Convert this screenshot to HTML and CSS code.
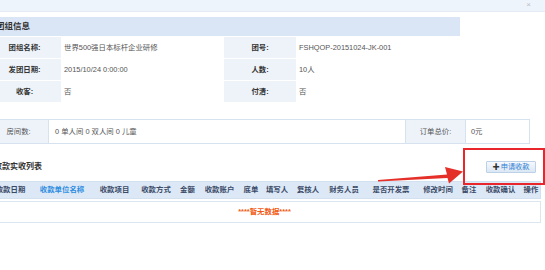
FILE: index.html
```html
<!DOCTYPE html>
<html lang="zh-CN">
<head>
  <meta charset="UTF-8" />
  <title>团组信息</title>
  <link rel="stylesheet" href="styles.css">
</head>
<body>
  <div class="topbar"><span class="close">×</span></div>

  <div class="content">
    <!-- 团组信息 -->
    <div class="section-head">团组信息</div>
    <div class="info">
      <div class="lbl">团组名称:</div><div class="val">世界500强日本标杆企业研修</div>
      <div class="lbl">团号:</div><div class="val">FSHQOP-20151024-JK-001</div>
      <div class="lbl">发团日期:</div><div class="val">2015/10/24 0:00:00</div>
      <div class="lbl">人数:</div><div class="val">10人</div>
      <div class="lbl">收客:</div><div class="val">否</div>
      <div class="lbl">付清:</div><div class="val">否</div>
    </div>

    <div class="room">
      <div class="room-lbl">房间数:</div>
      <div class="room-val">0 单人间 0 双人间 0 儿童</div>
      <div class="room-lbl total">订单总价:</div>
      <div class="room-val price">0元</div>
    </div>

    <!-- 收款列表 -->
    <div class="list-title">
      <span>收款实收列表</span>
      <button class="apply"><b>✚</b>申请收款</button>
    </div>
    <div class="grid-head">
      <span style="width:43px">收款日期</span>
      <span class="sorted" style="width:60px">收款单位名称</span>
      <span style="width:45px">收款项目</span>
      <span style="width:38px">收款方式</span>
      <span style="width:25px">金额</span>
      <span style="width:39px">收款账户</span>
      <span style="width:24px">底单</span>
      <span style="width:28px">填写人</span>
      <span style="width:34px">复核人</span>
      <span style="width:38px">财务人员</span>
      <span style="width:56px">是否开发票</span>
      <span style="width:38px">修改时间</span>
      <span style="width:24px">备注</span>
      <span style="width:39px">收款确认</span>
      <span style="width:22px">操作</span>
    </div>
    <div class="empty">****暂无数据****</div>
  </div>

  <!-- 标注 -->
  <div class="mark-box"></div>
  <svg class="mark-arrow" width="100" height="30" viewBox="370 162 100 30">
    <polygon points="378,180 447,174.5 445,167 463,171.5 449,183.5 447.5,178 378,181.6" fill="#e5302a"/>
  </svg>
</body>
</html>
```

FILE: styles.css
```css
* {
  margin: 0;
  padding: 0;
  box-sizing: border-box;
}

body {
  width: 545px;
  height: 270px;
  overflow: hidden;
  background: #fff;
  font-family: 'Liberation Sans', 'Noto Sans CJK SC', sans-serif;
  font-size: 7.4px;
  line-height: 1;
  color: #555;
  position: relative;
}

.topbar {
  height: 12px;
  background: #eef4fb;
  border-bottom: 1px solid #e4ebf4;
  position: relative;
}

.close {
  position: absolute;
  right: 14px;
  top: 1px;
  font-size: 8px;
  color: #b8bec8;
}

.content {
  margin-left: -12px;
}

.section-head {
  margin-top: 5px;
  width: 472px;
  height: 19px;
  line-height: 19px;
  padding-left: 8px;
  background: #dae6f6;
  font-size: 8.5px;
  font-weight: bold;
  color: #333;
}

.info {
  margin-top: 1px;
  width: 472px;
  display: grid;
  grid-template-columns: 73px 163px 72px 164px;
}

.info div {
  height: 22px;
  line-height: 22px;
  border-bottom: 1px solid #fff;
}

.info .lbl {
  background: #eef3fa;
  text-align: center;
  font-weight: bold;
  color: #333;
}

.info .val {
  padding-left: 3px;
}

.room {
  margin-top: 16px;
  width: 542px;
  height: 25px;
  display: flex;
  border: 1px solid #d6e2ef;
}

.room-lbl {
  width: 60px;
  background: #eef3fa;
  line-height: 23px;
  text-align: center;
  border-right: 1px solid #d6e2ef;
}

.room-val {
  width: 357px;
  line-height: 23px;
  padding-left: 6px;
  border-right: 1px solid #d6e2ef;
}

.room-val.price {
  flex: 1;
  padding-left: 5px;
  border-right: none;
}

.list-title {
  margin-top: 15px;
  height: 16px;
  width: 553px;
  display: flex;
  align-items: center;
  justify-content: space-between;
  padding-left: 6px;
  padding-right: 5px;
  font-size: 8px;
  font-weight: bold;
  color: #333;
}

.apply {
  width: 50px;
  height: 12px;
  border: 1px solid #bcd0e6;
  border-radius: 1px;
  background: linear-gradient(#f6f9fd, #dbe7f4);
  font-family: inherit;
  font-size: 7.2px;
  line-height: 10px;
  color: #2f80d4;
  font-weight: normal;
}

.apply b {
  color: #333;
  margin-right: 1px;
}

.grid-head {
  margin-top: 6px;
  width: 553px;
  height: 18px;
  display: flex;
  background: #dde8f6;
  border: 1px solid #d3e0ef;
  font-weight: bold;
  color: #3a4a66;
}

.grid-head span {
  flex: none;
  line-height: 16px;
  text-align: center;
  white-space: nowrap;
}

.grid-head .sorted {
  color: #2b8ce0;
}

.empty {
  margin-top: 2px;
  width: 553px;
  height: 22px;
  line-height: 20px;
  border: 1px solid #dce6f1;
  text-align: center;
  font-weight: bold;
  color: #f25a12;
}

.mark-box {
  position: absolute;
  left: 463px;
  top: 148px;
  width: 82px;
  height: 37px;
  border: 2px solid #e8262b;
}

.mark-arrow {
  position: absolute;
  left: 370px;
  top: 162px;
}
```
